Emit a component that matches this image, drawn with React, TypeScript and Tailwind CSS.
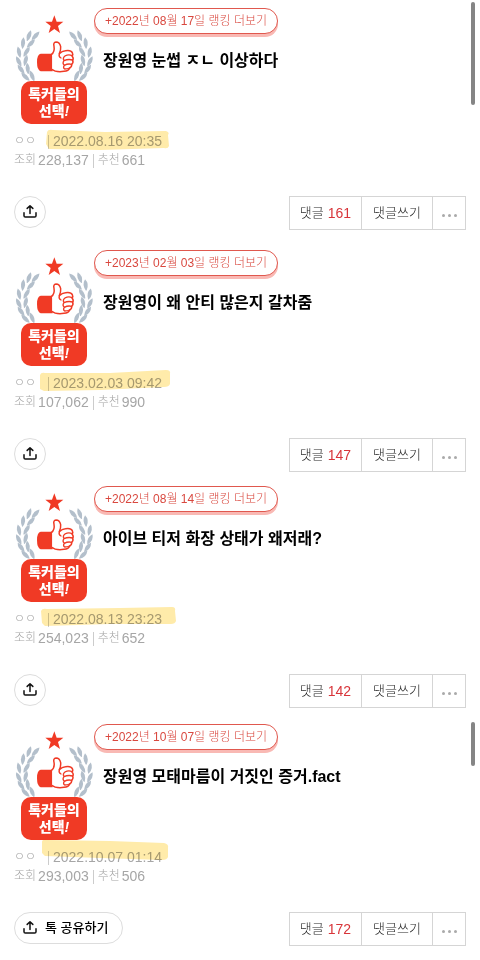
type Post = {
  id: number
  ranking: string
  title: string
  date: string
  views: string
  likes: string
  comments: number
  marker: string
  spacing: string
  wideShare?: boolean
}

const posts: Post[] = [
  {
    id: 1,
    ranking: '2022년 08월 17일',
    title: '장원영 눈썹 ㅈㄴ 이상하다',
    date: '2022.08.16 20:35',
    views: '228,137',
    likes: '661',
    comments: 161,
    marker: 'M7 8 Q8 5 13 6 L65 8 L126 7 Q130 8 128 11 L129 22 Q128 25 124 24 L60 26 L9 25 L6 20 Z',
    spacing: 'mb-5',
  },
  {
    id: 2,
    ranking: '2023년 02월 03일',
    title: '장원영이 왜 안티 많은지 갈차줌',
    date: '2023.02.03 09:42',
    views: '107,062',
    likes: '990',
    comments: 147,
    marker: 'M0 9 Q1 6 5 7 L70 7 L126 4 Q131 4 130 8 L130 18 Q129 21 124 21 L60 24 L4 25 L0 23 Z',
    spacing: 'mb-3.5',
  },
  {
    id: 3,
    ranking: '2022년 08월 14일',
    title: '아이브 티저 화장 상태가 왜저래?',
    date: '2022.08.13 23:23',
    views: '254,023',
    likes: '652',
    comments: 142,
    marker: 'M1 9 Q2 6 7 7 L80 6 L132 5 Q136 5 135 9 L136 19 Q135 22 131 22 L70 22 L5 24 L2 21 Z',
    spacing: 'mb-4',
  },
  {
    id: 4,
    ranking: '2022년 10월 07일',
    title: '장원영 모태마름이 거짓인 증거.fact',
    date: '2022.10.07 01:14',
    views: '293,003',
    likes: '506',
    comments: 172,
    marker: 'M2 2 Q2 -1 7 0 L70 1 L124 3 Q129 4 128 8 L128 17 Q127 20 122 20 L60 18 L5 16 L2 13 Z',
    spacing: 'mb-3.5',
    wideShare: true,
  },
]

// x, y, rotation of every leaf on the left branch
const leaves = [
  [87, 107, 20],
  [107, 107, 42],
  [69, 129, 6],
  [93, 130, 44],
  [57, 156, -12],
  [80, 155, 32],
  [56, 184, -26],
  [77, 181, 14],
  [63, 208, -36],
  [83, 205, -6],
  [76, 230, -46],
  [96, 227, -22],
]

function Branch() {
  return (
    <g fill="#b3bfcb">
      {leaves.map(([x, y, angle]) => (
        <path
          key={`${x}-${y}`}
          d="M0 -17 Q12 -2 1 17 L-1 17 Q-12 -2 0 -17 Z"
          transform={`translate(${x} ${y}) rotate(${angle})`}
        />
      ))}
    </g>
  )
}

function Emblem() {
  return (
    <div className="flex w-20 shrink-0 flex-col items-center pt-1.5">
      <svg viewBox="42 42 240 201" className="block h-[67px] w-20" aria-hidden="true">
        <path
          d="M163 46 L170 65 L190 65 L174 78 L180 99 L163 87 L146 99 L152 78 L136 65 L156 65 Z"
          fill="#f03a25"
        />
        <Branch />
        <g transform="translate(326 0) scale(-1 1)">
          <Branch />
        </g>
        <path
          d="M156 161 L122 161 Q111 163 111 186 Q111 211 122 214 L158 214 Z"
          fill="#f03a25"
        />
        <g stroke="#f03a25" strokeWidth="4.5" strokeLinecap="round" strokeLinejoin="round">
          <path
            d="M154 164 Q165 155 162 139 Q159 127 168 126 Q179 126 182 140 Q183 151 178 161 Q186 153 196 152 Q213 149 217 158 Q220 164 216 168 Q222 174 218 181 Q221 188 215 193 Q216 200 209 204 Q206 213 192 214 Q168 218 154 207 Z"
            fill="#fff"
          />
          <path
            d="M178 161 Q175 170 183 174 M195 168 Q206 162 216 167 M192 182 Q205 176 218 180 M193 196 Q204 190 215 193 M195 168 Q187 174 192 182 Q186 190 193 196 Q188 203 194 207 Q202 207 209 204"
            fill="none"
            strokeWidth="4"
          />
        </g>
      </svg>
      <div className="flex h-[43px] w-[66px] flex-col items-center justify-center rounded-[10px] bg-[#f03a25] text-sm leading-[17px] font-black text-white">
        <span>톡커들의</span>
        <span>
          선택<i>!</i>
        </span>
      </div>
    </div>
  )
}

function ShareIcon() {
  return (
    <svg
      viewBox="0 0 14 14"
      className="size-3.5 shrink-0"
      fill="none"
      stroke="#111"
      strokeWidth="1.5"
      strokeLinecap="round"
      strokeLinejoin="round"
      aria-hidden="true"
    >
      <path d="M7 8.6 V1 M4.2 3.4 L7 0.8 L9.8 3.4 M1 7.8 V10.8 Q1 12.1 2.3 12.1 H11.7 Q13 12.1 13 10.8 V7.8" />
    </svg>
  )
}

function PostMeta({ post }: { post: Post }) {
  return (
    <div className="relative mt-2 text-sm leading-[19px] font-light text-[#a6a6a6]">
      <div className="flex items-center">
        <span className="w-[34px] text-xs leading-[19px]">ㅇㅇ</span>
        <span className="mr-1 h-3.5 w-px bg-[#ccc]" />
        <time>{post.date}</time>
      </div>
      <div className="flex items-center">
        <span className="mr-0.5 text-xs leading-[19px]">조회</span>
        {post.views}
        <span className="mx-1 h-3.5 w-px bg-[#ccc]" />
        <span className="mr-0.5 text-xs leading-[19px]">추천</span>
        {post.likes}
      </div>
      <svg
        viewBox="0 0 140 30"
        className="pointer-events-none absolute -top-2 left-[26px] h-[30px] w-[140px] overflow-visible mix-blend-multiply"
        aria-hidden="true"
      >
        <path d={post.marker} fill="#ffebaa" />
      </svg>
    </div>
  )
}

function PostActions({ post }: { post: Post }) {
  return (
    <div className="mt-[26px] flex items-start justify-between">
      {post.wideShare ? (
        <button className="flex h-8 items-center gap-2 rounded-full border border-[#ddd] pr-3.5 pl-2 text-[13px] font-medium text-black">
          <ShareIcon />
          톡 공유하기
        </button>
      ) : (
        <button
          aria-label="공유"
          className="flex size-8 items-center justify-center rounded-full border border-[#ddd]"
        >
          <ShareIcon />
        </button>
      )}
      <div className="flex h-[34px] divide-x divide-[#d5d5d5] border border-[#d5d5d5] text-[13px] font-light text-[#222]">
        <button className="flex w-[72px] items-center justify-center gap-1">
          댓글 <span className="text-sm text-[#d8353a]">{post.comments}</span>
        </button>
        <button className="w-[71px]">댓글쓰기</button>
        <button aria-label="더보기" className="flex w-8 items-center justify-center gap-[3px] pt-1">
          <span className="size-[3px] rounded-full bg-[#aaa]" />
          <span className="size-[3px] rounded-full bg-[#aaa]" />
          <span className="size-[3px] rounded-full bg-[#aaa]" />
        </button>
      </div>
    </div>
  )
}

function PostCard({ post }: { post: Post }) {
  return (
    <article className={`relative px-3.5 ${post.spacing}`}>
      <div className="flex">
        <Emblem />
        <div className="min-w-0 flex-1">
          <a
            href="#"
            className="flex h-[26px] w-[184px] items-center justify-center rounded-full border border-[#e0584e] bg-white text-xs font-light text-[#d9483f] shadow-[0_3px_0_#f9b9b4]"
          >
            +{post.ranking} 랭킹 더보기
          </a>
          <h2 className="mt-[15px] ml-[9px] text-base leading-6 font-bold text-black">{post.title}</h2>
        </div>
      </div>
      <PostMeta post={post} />
      <PostActions post={post} />
      {post.wideShare && (
        <div className="absolute -top-0.5 right-[5px] h-11 w-1 rounded-full bg-[#858585]" />
      )}
    </article>
  )
}

export default function App() {
  return (
    <main
      lang="ko"
      className="relative min-h-screen bg-white pt-2 font-['Liberation_Sans','Noto_Sans_CJK_KR',sans-serif]"
    >
      {posts.map((post) => (
        <PostCard key={post.id} post={post} />
      ))}
      <div className="absolute top-0.5 right-[5px] h-[103px] w-1 rounded-full bg-[#858585]" />
    </main>
  )
}
